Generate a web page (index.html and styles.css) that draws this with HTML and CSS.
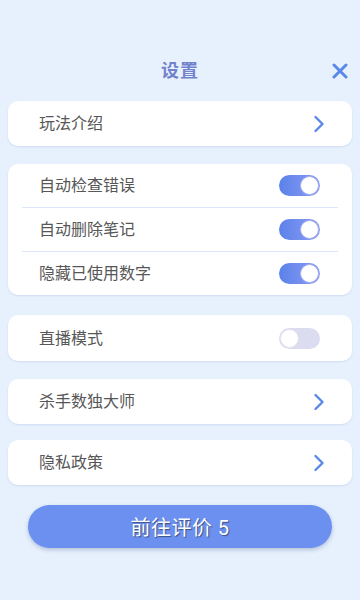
FILE: index.html
```html
<!DOCTYPE html>
<html lang="zh">
<head>
<meta charset="utf-8">
<link rel="stylesheet" href="styles.css">
</head>
<body>
<div class="page">
  <div class="header">
    <div class="title">设置</div>
    <svg class="close" viewBox="0 0 16 16" width="16" height="16"><path d="M2 2 L14 14 M14 2 L2 14" stroke="#5a88e8" stroke-width="3" stroke-linecap="round" fill="none"/></svg>
  </div>
  <div class="card row link c1">
    <span class="label">玩法介绍</span>
    <svg class="chev" viewBox="0 0 12 18" width="12" height="18"><path d="M2.5 2 L9.5 9 L2.5 16" stroke="#5a88e8" stroke-width="2.4" stroke-linecap="round" stroke-linejoin="round" fill="none"/></svg>
  </div>
  <div class="card group c2">
    <div class="row tog"><span class="label">自动检查错误</span><span class="switch on"><span class="knob"></span></span></div>
    <div class="divider"></div>
    <div class="row tog"><span class="label">自动删除笔记</span><span class="switch on"><span class="knob"></span></span></div>
    <div class="divider"></div>
    <div class="row tog"><span class="label">隐藏已使用数字</span><span class="switch on"><span class="knob"></span></span></div>
  </div>
  <div class="card row tog c3">
    <span class="label">直播模式</span><span class="switch off"><span class="knob"></span></span>
  </div>
  <div class="card row link c4">
    <span class="label">杀手数独大师</span>
    <svg class="chev" viewBox="0 0 12 18" width="12" height="18"><path d="M2.5 2 L9.5 9 L2.5 16" stroke="#5a88e8" stroke-width="2.4" stroke-linecap="round" stroke-linejoin="round" fill="none"/></svg>
  </div>
  <div class="card row link c5">
    <span class="label">隐私政策</span>
    <svg class="chev" viewBox="0 0 12 18" width="12" height="18"><path d="M2.5 2 L9.5 9 L2.5 16" stroke="#5a88e8" stroke-width="2.4" stroke-linecap="round" stroke-linejoin="round" fill="none"/></svg>
  </div>
  <div class="btn">前往评价 5</div>
</div>
</body>
</html>
```
FILE: styles.css
```css
* { box-sizing: border-box; }
html, body { margin: 0; padding: 0; }
body {
  width: 360px;
  height: 600px;
  background: #e7f1fd;
  font-family: "Noto Sans CJK SC", "Noto Sans", sans-serif;
  overflow: hidden;
}
.page {
  padding: 50px 8px 0;
  display: flex;
  flex-direction: column;
}
.header {
  position: relative;
  height: 40px;
  display: flex;
  align-items: center;
  justify-content: center;
  margin-bottom: 11px;
}
.title {
  font-size: 18px;
  font-weight: bold;
  color: #7282cc;
  letter-spacing: 1px;
  margin-top: -2px;
}
.close {
  position: absolute;
  right: 4px;
  top: 13px;
}
.card {
  background: #fff;
  border-radius: 10px;
  box-shadow: 0 1px 2px rgba(110, 140, 200, 0.2);
}
.row {
  display: flex;
  align-items: center;
  justify-content: space-between;
  padding: 0 32px 0 31px;
}
.label {
  font-size: 16px;
  color: #575757;
  line-height: 20px;
  margin-top: -3px;
}
.link { height: 45px; padding-right: 27px; }
.c1 { margin-bottom: 18px; }
.c2 { margin-bottom: 20px; }
.c3 { height: 46px; margin-bottom: 18px; }
.c4 { margin-bottom: 16px; }
.c5 { margin-bottom: 20px; }
.group .row { height: 43px; }
.divider {
  height: 1px;
  background: #dce5fb;
  margin: 0 14px;
}
.switch {
  position: relative;
  width: 41px;
  height: 21px;
  border-radius: 11px;
}
.switch.on { background: linear-gradient(to right, #5b82ea, #8e9cf2); }
.switch.off { background: #dcdcf0; }
.knob {
  position: absolute;
  top: 1px;
  width: 19px;
  height: 19px;
  border-radius: 50%;
  background: #fff;
}
.on .knob { right: 1px; border: 1px solid #a3b0f2; }
.off .knob { left: 1px; border: 1px solid #e2e2f2; }
.chev { display: block; }
.btn {
  margin: 0 20px;
  height: 43px;
  border-radius: 22px;
  background: #6b90ef;
  box-shadow: 0 2px 4px rgba(60, 80, 140, 0.3);
  color: #fff;
  font-family: Roboto, "Noto Sans CJK SC", sans-serif;
  font-size: 20px;
  display: flex;
  align-items: center;
  justify-content: center;
  text-shadow: 1px 1px 1px rgba(0, 0, 0, 0.45);
  letter-spacing: 0.5px;
}
```
